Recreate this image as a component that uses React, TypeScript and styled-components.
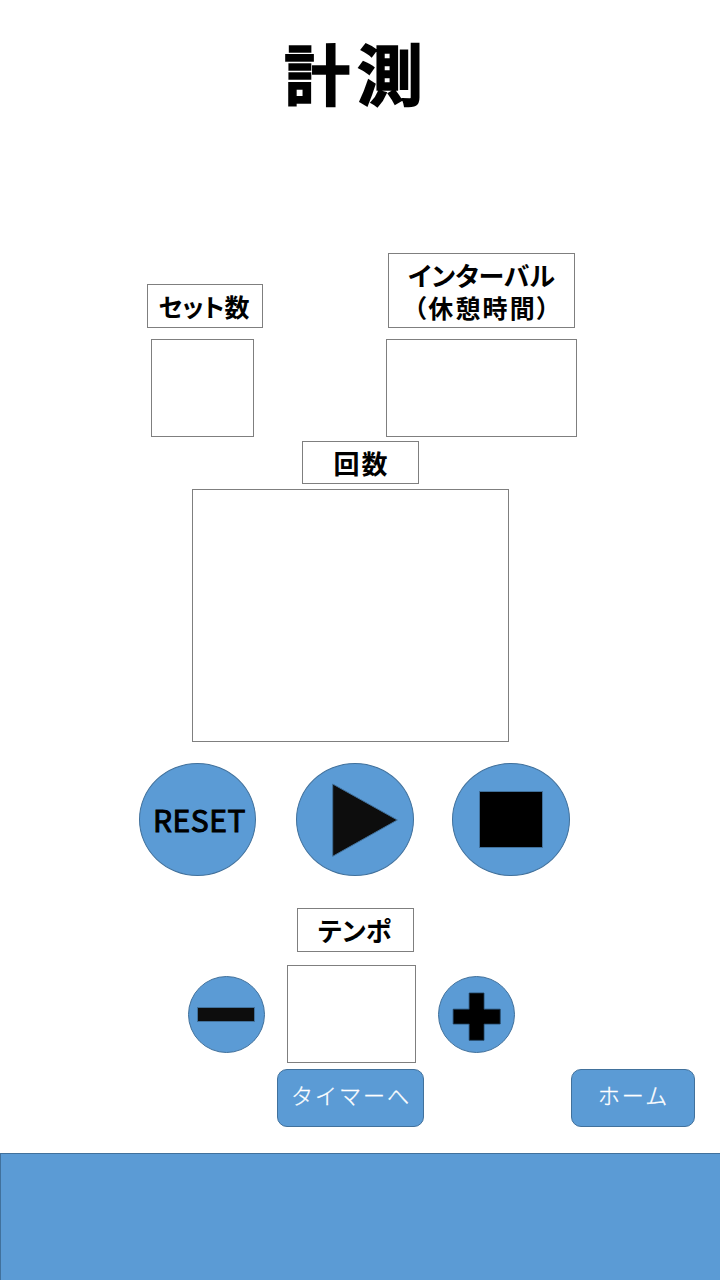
import React from 'react';
import styled, { createGlobalStyle } from 'styled-components';

const BLUE = '#5b9bd5';
const EDGE = '#41719c';

const GlobalStyle = createGlobalStyle`
  *, *::before, *::after { box-sizing: border-box; }
  html, body { margin: 0; padding: 0; background: #fff; }
  body { font-family: "Noto Sans CJK JP", "Noto Sans", sans-serif; color: #000; }
`;

const Screen = styled.main`
  width: 720px;
  height: 1280px;
  overflow: hidden;
  display: flex;
  flex-direction: column;
  background: #fff;
`;

const Header = styled.header`
  height: 253px;
  padding: 26px 0 0 284px;
`;

const Title = styled.h1`
  margin: 0;
  font-size: 66px;
  line-height: 90px;
  font-weight: 700;
  letter-spacing: 7px;
  white-space: nowrap;
  -webkit-text-stroke: 1.6px #000;
`;

const Row = styled.div<{ $height: number; $left?: number; $gap?: number; $align?: string }>`
  display: flex;
  flex: none;
  align-items: ${p => p.$align ?? 'flex-start'};
  height: ${p => p.$height}px;
  padding-left: ${p => p.$left ?? 0}px;
  gap: ${p => p.$gap ?? 0}px;
`;

const Label = styled.div<{ $w: number; $h: number; $nudge?: boolean }>`
  flex: none;
  width: ${p => p.$w}px;
  height: ${p => p.$h}px;
  padding: ${p => (p.$nudge ? '0 2px 1px 0' : '1px 0 0')};
  border: 1px solid #7f7f7f;
  display: flex;
  flex-direction: column;
  align-items: center;
  justify-content: center;
`;

const LabelText = styled.span<{ $spacing?: number; $size?: number; $palt?: boolean }>`
  display: block;
  font-size: ${p => p.$size ?? 26}px;
  line-height: 32px;
  font-weight: 700;
  white-space: nowrap;
  letter-spacing: ${p => p.$spacing ?? 0}px;
  margin-right: ${p => -(p.$spacing ?? 0)}px;
  font-feature-settings: ${p => (p.$palt ? '"palt"' : 'normal')};
`;

const ValueBox = styled.div<{ $w: number; $h: number }>`
  flex: none;
  width: ${p => p.$w}px;
  height: ${p => p.$h}px;
  border: 1px solid #7f7f7f;
`;

const RoundButton = styled.button<{ $w: number; $h: number; $before?: number }>`
  flex: none;
  display: flex;
  align-items: center;
  justify-content: center;
  width: ${p => p.$w}px;
  height: ${p => p.$h}px;
  margin: 0 0 0 ${p => p.$before ?? 0}px;
  padding: 0;
  border: 1px solid ${EDGE};
  border-radius: 50%;
  background: ${BLUE};
  color: #000;
  font-family: inherit;
`;

const Icon = styled.svg`
  display: block;
  flex: none;
`;

const ResetText = styled.span`
  font-size: 30px;
  line-height: 36px;
  padding: 0 0 1px 4px;
  letter-spacing: 0.6px;
  -webkit-text-stroke: 1px #000;
`;

const NavButton = styled.button<{ $w: number }>`
  flex: none;
  width: ${p => p.$w}px;
  height: 58px;
  padding: 0 0 8px 1px;
  border: 1px solid ${EDGE};
  border-radius: 10px;
  background: ${BLUE};
  color: #fff;
  font-family: "Noto Sans CJK JP", sans-serif;
  font-size: 22px;
  font-weight: 300;
  line-height: 30px;
  letter-spacing: 2px;
  white-space: nowrap;
  -webkit-text-stroke: 0.3px #fff;
`;

const Footer = styled.footer`
  flex: 1;
  background: ${BLUE};
  border-top: 1px solid ${EDGE};
  border-left: 1px solid ${EDGE};
`;

export default function App() {
  return (
    <>
      <GlobalStyle />
      <Screen>
        <Header>
          <Title>計測</Title>
        </Header>

        <Row $height={86} $left={147} $gap={125}>
          <Row $height={75} $align="flex-end">
            <Label $w={116} $h={44} $nudge>
              <LabelText $palt $size={25}>セット数</LabelText>
            </Label>
          </Row>
          <Label $w={187} $h={75}>
            <LabelText $palt>インターバル</LabelText>
            <LabelText $palt $size={25} $spacing={2.1}>（休憩時間）</LabelText>
          </Label>
        </Row>
        <Row $height={102} $left={151} $gap={132}>
          <ValueBox $w={103} $h={98} />
          <ValueBox $w={191} $h={98} />
        </Row>

        <Row $height={48} $left={302}>
          <Label $w={117} $h={43}>
            <LabelText $spacing={2}>回数</LabelText>
          </Label>
        </Row>
        <Row $height={274} $left={192}>
          <ValueBox $w={317} $h={253} />
        </Row>

        <Row $height={145} $left={139}>
          <RoundButton $w={117} $h={113}>
            <ResetText>RESET</ResetText>
          </RoundButton>
          <RoundButton $w={118} $h={113} $before={40} aria-label="再生">
            <Icon width="116" height="111" viewBox="297 764 116 111">
              <path d="M332.7 784V856.3L397.3 820Z" fill="#0d0d0d" stroke={EDGE} />
            </Icon>
          </RoundButton>
          <RoundButton $w={118} $h={113} $before={38} aria-label="停止">
            <Icon width="116" height="111" viewBox="453 764 116 111">
              <rect x="479.5" y="791.5" width="63" height="56" fill="#000" stroke={EDGE} />
            </Icon>
          </RoundButton>
        </Row>

        <Row $height={57} $left={297}>
          <Label $w={117} $h={44} $nudge>
            <LabelText $palt>テンポ</LabelText>
          </Label>
        </Row>
        <Row $height={104} $left={188} $gap={22}>
          <Row $height={98} $align="center">
            <RoundButton $w={77} $h={77} aria-label="減らす">
              <Icon width="75" height="75" viewBox="189 977 75 75">
                <rect x="197.5" y="1007.5" width="57" height="14" fill="#0d0d0d" stroke={EDGE} />
              </Icon>
            </RoundButton>
          </Row>
          <ValueBox $w={129} $h={98} />
          <Row $height={98} $align="center">
            <RoundButton $w={77} $h={77} aria-label="増やす">
              <Icon width="75" height="75" viewBox="439 977 75 75">
                <path
                  d="M469.2 993H484V1009.2H500.2V1024H484V1040.3H469.2V1024H453.2V1009.2H469.2Z"
                  fill="#000"
                  stroke="#1f3f5c"
                  strokeWidth="0.8"
                />
              </Icon>
            </RoundButton>
          </Row>
        </Row>

        <Row $height={84} $left={277} $gap={147}>
          <NavButton $w={147}>タイマーへ</NavButton>
          <NavButton $w={124}>ホーム</NavButton>
        </Row>

        <Footer />
      </Screen>
    </>
  );
}
